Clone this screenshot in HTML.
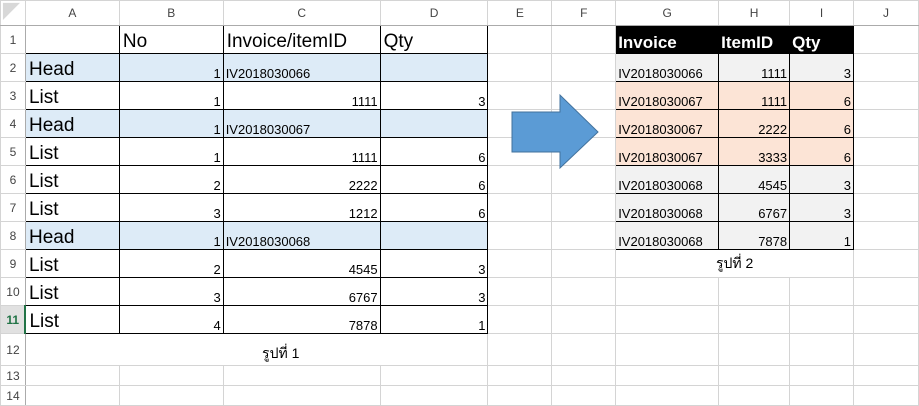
<!DOCTYPE html>
<html><head><meta charset="utf-8"><style>
body{margin:0;width:919px;height:400px;overflow:hidden;background:#fff;font-family:"Liberation Sans","Noto Sans CJK SC",sans-serif}
table{border-collapse:collapse;table-layout:fixed;position:absolute;left:0;top:0}
td{border:1px solid #d4d4d4;padding:0 2px;white-space:nowrap;overflow:hidden;font-size:13px;color:#000;vertical-align:bottom}
tr.h td{height:24px;text-align:center;vertical-align:middle;font-size:12px;color:#444;border-bottom:1px solid #ababab}
td.rn{text-align:center;font-size:12px;color:#444;vertical-align:middle;padding:0;border-right:1px solid #ababab}
tr.r td{height:27px}
td.b{border:1px solid #000}
td.big{font-size:19px;padding-left:3px}
td.n{text-align:right}
td.bl{background:#ddebf7}
td.k{background:#000;color:#fff;font-weight:bold;font-size:17px;border:1px solid #000}
td.g{background:#f2f2f2;border:1px solid #000}
td.o{background:#fce4d6;border:1px solid #000}
td.sel{background:#e1e1e1;color:#217346;font-weight:bold;border-right:2px solid #217346}
</style></head><body>
<table>
<colgroup><col style="width:25px"><col style="width:94px"><col style="width:104px"><col style="width:157px"><col style="width:108px"><col style="width:64px"><col style="width:64px"><col style="width:103px"><col style="width:71px"><col style="width:64px"><col style="width:65px"></colgroup>
<tr class="h"><td style="background:#fff"></td><td>A</td><td>B</td><td>C</td><td>D</td><td>E</td><td>F</td><td>G</td><td>H</td><td>I</td><td>J</td></tr>
<tr class="r"><td class="rn">1</td><td class="b"></td><td class="b big">No</td><td class="b big">Invoice/itemID</td><td class="b big">Qty</td><td></td><td></td><td class="k">Invoice</td><td class="k">ItemID</td><td class="k">Qty</td><td></td></tr>
<tr class="r"><td class="rn">2</td><td class="b big bl">Head</td><td class="b n bl">1</td><td class="b bl">IV2018030066</td><td class="b bl"></td><td></td><td></td><td class="g">IV2018030066</td><td class="g n">1111</td><td class="g n">3</td><td></td></tr>
<tr class="r"><td class="rn">3</td><td class="b big">List</td><td class="b n">1</td><td class="b n">1111</td><td class="b n">3</td><td></td><td></td><td class="o">IV2018030067</td><td class="o n">1111</td><td class="o n">6</td><td></td></tr>
<tr class="r"><td class="rn">4</td><td class="b big bl">Head</td><td class="b n bl">1</td><td class="b bl">IV2018030067</td><td class="b bl"></td><td></td><td></td><td class="o">IV2018030067</td><td class="o n">2222</td><td class="o n">6</td><td></td></tr>
<tr class="r"><td class="rn">5</td><td class="b big">List</td><td class="b n">1</td><td class="b n">1111</td><td class="b n">6</td><td></td><td></td><td class="o">IV2018030067</td><td class="o n">3333</td><td class="o n">6</td><td></td></tr>
<tr class="r"><td class="rn">6</td><td class="b big">List</td><td class="b n">2</td><td class="b n">2222</td><td class="b n">6</td><td></td><td></td><td class="g">IV2018030068</td><td class="g n">4545</td><td class="g n">3</td><td></td></tr>
<tr class="r"><td class="rn">7</td><td class="b big">List</td><td class="b n">3</td><td class="b n">1212</td><td class="b n">6</td><td></td><td></td><td class="g">IV2018030068</td><td class="g n">6767</td><td class="g n">3</td><td></td></tr>
<tr class="r"><td class="rn">8</td><td class="b big bl">Head</td><td class="b n bl">1</td><td class="b bl">IV2018030068</td><td class="b bl"></td><td></td><td></td><td class="g">IV2018030068</td><td class="g n">7878</td><td class="g n">1</td><td></td></tr>
<tr class="r"><td class="rn">9</td><td class="b big">List</td><td class="b n">2</td><td class="b n">4545</td><td class="b n">3</td><td></td><td></td><td colspan="3" style="text-align:center;font-size:14px;vertical-align:middle">รูปที่ 2</td><td></td></tr>
<tr class="r"><td class="rn">10</td><td class="b big">List</td><td class="b n">3</td><td class="b n">6767</td><td class="b n">3</td><td></td><td></td><td></td><td></td><td></td><td></td></tr>
<tr class="r"><td class="rn sel">11</td><td class="b big">List</td><td class="b n">4</td><td class="b n">7878</td><td class="b n">1</td><td></td><td></td><td></td><td></td><td></td><td></td></tr>
<tr><td class="rn" style="height:31px">12</td><td colspan="4" style="text-align:center;font-size:14px;padding-left:50px;vertical-align:middle;padding-top:8px">รูปที่ 1</td><td></td><td></td><td></td><td></td><td></td><td></td></tr>
<tr><td class="rn" style="height:19px">13</td><td></td><td></td><td></td><td></td><td></td><td></td><td></td><td></td><td></td><td></td></tr>
<tr><td class="rn" style="height:19px">14</td><td></td><td></td><td></td><td></td><td></td><td></td><td></td><td></td><td></td><td></td></tr>
</table>
<svg style="position:absolute;left:0;top:0" width="919" height="400"><polygon points="1,1 20,1 1,20" fill="#d8d8d8" transform="translate(2,2) scale(0.9)"/>
<polygon points="512,112 560,112 560,95 598,132 560,168 560,152 512,152" fill="#5b9bd5" stroke="#41719c" stroke-width="1"/></svg>
</body></html>
